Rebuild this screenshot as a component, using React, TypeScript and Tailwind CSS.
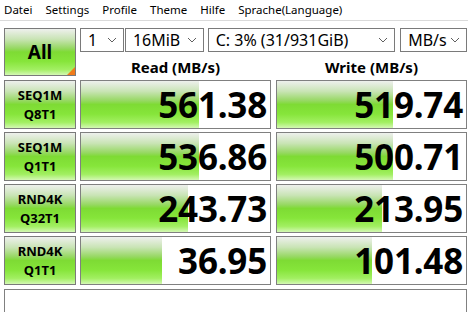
import React from "react";

const bar =
  "bg-[linear-gradient(to_bottom,#eef0ed_0%,#c9e4b5_22%,#96d862_42%,#7edb34_50%,#86e53a_70%,#a2ef62_88%,#d4f8b4_100%)]";

type Row = { top: string; bottom: string; read: string; write: string; rw: number; ww: number };

const rows: Row[] = [
  { top: "SEQ1M", bottom: "Q8T1", read: "561.38", write: "519.74", rw: 118, ww: 116 },
  { top: "SEQ1M", bottom: "Q1T1", read: "536.86", write: "500.71", rw: 118, ww: 116 },
  { top: "RND4K", bottom: "Q32T1", read: "243.73", write: "213.95", rw: 107, ww: 105 },
  { top: "RND4K", bottom: "Q1T1", read: "36.95", write: "101.48", rw: 81, ww: 95 },
];

function Chevron() {
  return (
    <svg width="10" height="6" viewBox="0 0 10 6" className="shrink-0">
      <polyline points="1,1 5,5 9,1" fill="none" stroke="#606060" strokeWidth="1" />
    </svg>
  );
}

function Combo({ text, width, gap }: { text: string; width: number; gap: number }) {
  return (
    <div
      className="flex h-[24px] items-center justify-between border border-[#7a7a7a] bg-white pl-[7px] pr-[6px] text-[16px] leading-none"
      style={{ width, marginLeft: gap }}
    >
      <span>{text}</span>
      <Chevron />
    </div>
  );
}

function Value({ value, w }: { value: string; w: number }) {
  return (
    <div className="relative h-[49px] w-[191px] border border-[#808080] bg-white">
      <div className={`absolute left-0 top-0 h-full ${bar}`} style={{ width: w }} />
      <div className="relative flex h-full items-center justify-end pr-[3px] text-[35px] font-bold leading-none tracking-[-0.2px] text-black">
        {value}
      </div>
    </div>
  );
}

export default function App() {
  const menu = ["Datei", "Settings", "Profile", "Theme", "Hilfe", "Sprache(Language)"];
  return (
    <div className="h-[312px] w-[468px] overflow-hidden bg-white text-black" style={{ fontFamily: '"Noto Sans", "Open Sans", sans-serif' }}>
      <div className="flex h-[21px] items-center gap-x-[13px] border-b border-[#dadada] pl-[4px] text-[11.5px] leading-none">
        {menu.map((m) => (
          <span key={m}>{m}</span>
        ))}
      </div>

      <div className="pl-[4px] pt-[7px]">
        <div className="flex">
          <div className={`relative flex h-[48px] w-[72px] items-center justify-center border border-[#7a7a7a] text-[19px] font-bold ${bar}`}>
            All
            <div className="absolute bottom-0 right-0 h-0 w-0 border-b-[8px] border-l-[8px] border-b-[#f07a1a] border-l-transparent" />
          </div>
          <div className="ml-[4px] w-[387px]">
            <div className="flex">
              <Combo text="1" width={44} gap={0} />
              <Combo text="16MiB" width={79} gap={1} />
              <Combo text="C: 3% (31/931GiB)" width={188} gap={4} />
              <Combo text="MB/s" width={67} gap={5} />
            </div>
            <div className="flex h-[24px] items-end pb-[1px] text-[15px] font-bold leading-none">
              <div className="w-[191px] text-center">Read (MB/s)</div>
              <div className="ml-[5px] w-[191px] text-center">Write (MB/s)</div>
            </div>
          </div>
        </div>

        <div className="mt-[4px] flex flex-col gap-[3px]">
          {rows.map((r, i) => (
            <div key={i} className="flex">
              <div className={`flex h-[49px] w-[72px] flex-col items-center justify-center gap-[3px] border border-[#7a7a7a] text-[13px] font-bold leading-[16px] ${bar}`}>
                <span>{r.top}</span>
                <span>{r.bottom}</span>
              </div>
              <div className="ml-[4px]">
                <Value value={r.read} w={r.rw} />
              </div>
              <div className="ml-[5px]">
                <Value value={r.write} w={r.ww} />
              </div>
            </div>
          ))}
          <div className="mt-[1px] h-[40px] w-[463px] border border-[#808080] bg-white" />
        </div>
      </div>
    </div>
  );
}
